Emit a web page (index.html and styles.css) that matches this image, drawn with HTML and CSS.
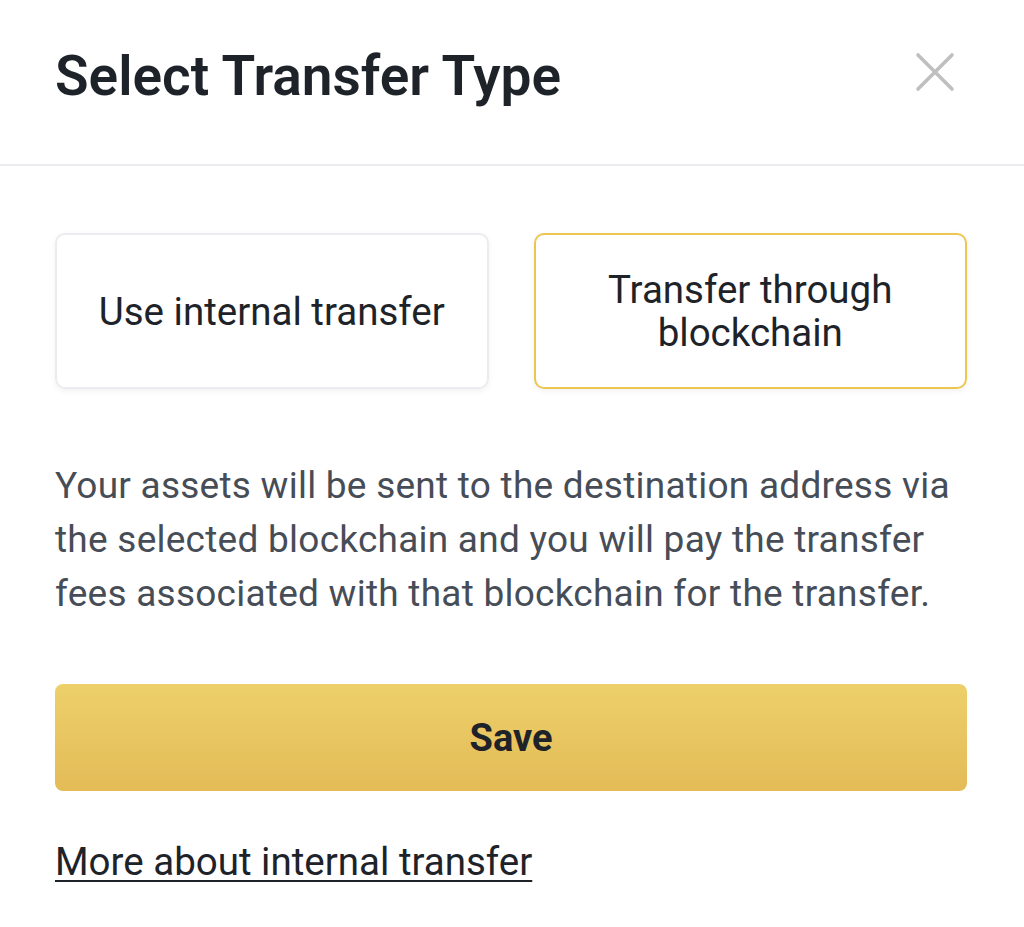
FILE: index.html
```html
<!DOCTYPE html>
<html lang="en">
<head>
<meta charset="utf-8">
<title>Select Transfer Type</title>
<link rel="stylesheet" href="styles.css">
</head>
<body>
<div class="modal">
  <header class="modal-header">
    <h1 class="modal-title">Select Transfer Type</h1>
    <button class="close-btn" aria-label="Close">
      <svg viewBox="0 0 40 40" width="40" height="40"><path d="M3 3 L37 37 M37 3 L3 37" stroke="#bfbfc1" stroke-width="3.6" stroke-linecap="round" fill="none"/></svg>
    </button>
  </header>
  <main class="modal-body">
    <div class="options">
      <div class="option">Use internal transfer</div>
      <div class="option option-selected">Transfer through<br>blockchain</div>
    </div>
    <p class="description">Your assets will be sent to the destination address via the selected blockchain and you will pay the transfer fees associated with that blockchain for the transfer.</p>
    <button class="save-btn">Save</button>
    <a class="more-link" href="#">More about internal transfer</a>
  </main>
</div>
</body>
</html>
```

FILE: styles.css
```css
html, body {
  margin: 0;
  padding: 0;
  background: #ffffff;
}

body {
  font-family: Roboto, "Noto Sans", "Liberation Sans", sans-serif;
  color: #1e2329;
}

.modal {
  width: 1024px;
  height: 927px;
  background: #ffffff;
}

.modal-header {
  display: flex;
  align-items: center;
  justify-content: space-between;
  height: 166px;
  box-sizing: border-box;
  padding: 0 69px 12px 55px;
  border-bottom: 2px solid #eaecef;
}

.modal-title {
  margin: 0;
  font-size: 55px;
  font-weight: 600;
  line-height: 1.2;
  color: #1e2329;
}

.close-btn {
  background: none;
  border: 0;
  padding: 0;
  width: 40px;
  height: 40px;
  margin-bottom: 8px;
  display: flex;
}

.modal-body {
  padding: 67px 57px 0 55px;
  display: flex;
  flex-direction: column;
}

.options {
  display: grid;
  grid-template-columns: 1fr 1fr;
  gap: 45px;
}

.option {
  height: 156px;
  box-sizing: border-box;
  border: 2px solid #eaecef;
  border-radius: 10px;
  box-shadow: 0 2px 6px rgba(0, 0, 0, 0.06);
  display: flex;
  align-items: center;
  justify-content: center;
  text-align: center;
  font-size: 38.5px;
  line-height: 43px;
  color: #1e2329;
}

.option-selected {
  border-color: #ecc650;
}

.description {
  margin: 70px 0 0;
  font-size: 37px;
  letter-spacing: 0.25px;
  line-height: 54px;
  color: #474d57;
}

.save-btn {
  margin-top: 63px;
  height: 107px;
  border: 0;
  border-radius: 8px;
  background: linear-gradient(180deg, #edd06a 0%, #e3bb57 100%);
  font-family: inherit;
  font-size: 38px;
  font-weight: 700;
  color: #1e2329;
}

.more-link {
  align-self: flex-start;
  margin-top: 46px;
  font-size: 38.5px;
  line-height: 50px;
  color: #1e2329;
  text-decoration: underline;
  text-decoration-thickness: 2px;
  text-underline-offset: 5px;
}
```
